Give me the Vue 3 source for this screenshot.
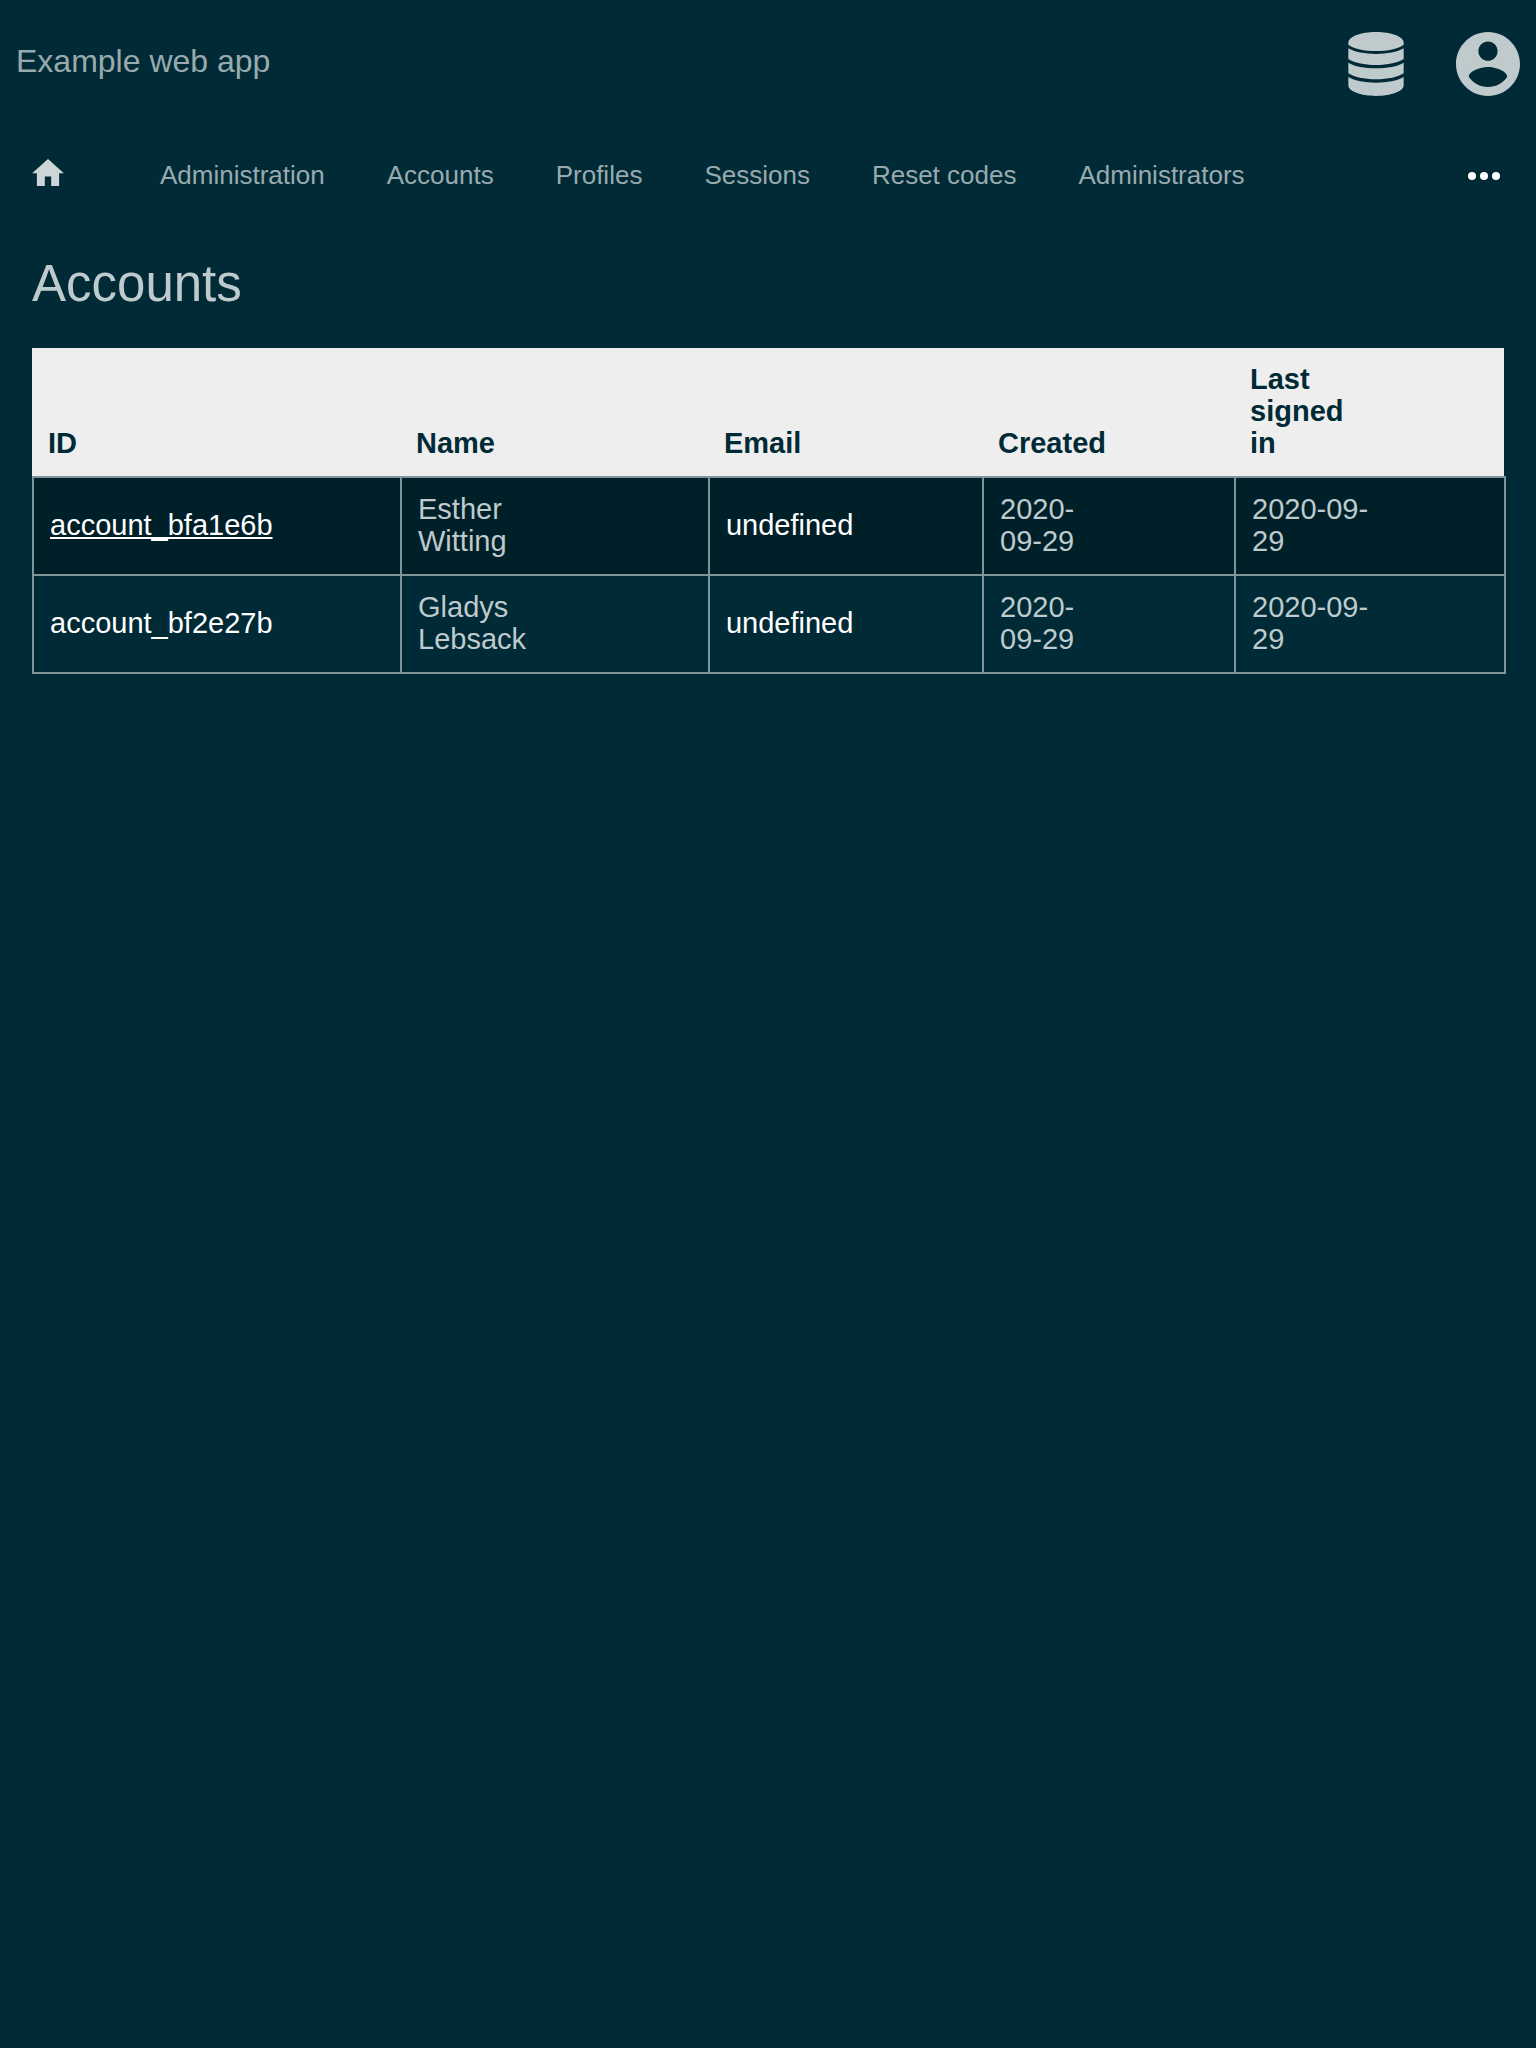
<script setup>
const links = ['Administration', 'Accounts', 'Profiles', 'Sessions', 'Reset codes', 'Administrators']

const columns = [
  { label: 'ID', width: '25%' },
  { label: 'Name', width: '20.92%' },
  { label: 'Email', width: '18.62%' },
  { label: 'Created', width: '17.12%' },
  { label: 'Last signed in', width: '18.34%' },
]

const accounts = [
  { id: 'account_bfa1e6b', name: 'Esther Witting', created: '2020-09-29', signedIn: '2020-09-29', active: true },
  { id: 'account_bf2e27b', name: 'Gladys Lebsack', created: '2020-09-29', signedIn: '2020-09-29', active: false },
]
</script>

<template>
  <div class="page">
    <header class="header">
      <a class="brand" href="#">Example web app</a>
      <div class="tools">
        <button type="button" class="icon-button" aria-label="Data">
          <svg width="56" height="64" viewBox="0 0 168 192" fill="currentColor" aria-hidden="true">
            <path d="M1 32C1 14 38 0 84 0s83 14 83 32v6c-16 12-48 19-83 19S17 50 1 38z" />
            <path d="M1 49c18 11 50 17 83 17s65-6 83-17v32c-16 11-48 18-83 18S17 92 1 81z" />
            <path d="M1 92c18 11 50 17 83 17s65-6 83-17v32c-16 11-48 18-83 18S17 135 1 124z" />
            <path d="M1 135c18 11 50 17 83 17s65-6 83-17v25c0 18-37 32-83 32S1 178 1 160z" />
          </svg>
        </button>
        <button type="button" class="icon-button" aria-label="Your account">
          <svg width="64" height="64" viewBox="2 2 20 20" fill="currentColor" aria-hidden="true">
            <path d="M12 2C6.480 2 2 6.480 2 12s4.480 10 10 10 10-4.480 10-10S17.520 2 12 2zm0 3c1.660 0 3 1.340 3 3s-1.340 3-3 3-3-1.340-3-3 1.340-3 3-3zm0 14.200c-2.500 0-4.710-1.280-6-3.220.030-1.990 4-3.080 6-3.080 1.990 0 5.970 1.090 6 3.080-1.290 1.940-3.500 3.220-6 3.220z" />
          </svg>
        </button>
      </div>
    </header>

    <nav class="nav" aria-label="Main">
      <a class="home" href="#" aria-label="Home">
        <svg width="32" height="27" viewBox="2 3 20 17" fill="currentColor" aria-hidden="true">
          <path d="M10 20v-6h4v6h5v-8h3L12 3 2 12h3v8z" />
        </svg>
      </a>
      <div class="links">
        <a v-for="link in links" :key="link" class="link" href="#">{{ link }}</a>
      </div>
      <button type="button" class="more" aria-label="More">
        <svg width="32" height="8" viewBox="0 0 32 8" fill="currentColor" aria-hidden="true">
          <circle cx="4" cy="4" r="4" />
          <circle cx="16" cy="4" r="4" />
          <circle cx="28" cy="4" r="4" />
        </svg>
      </button>
    </nav>

    <main class="main">
      <h1 class="title">Accounts</h1>
      <table class="table">
        <colgroup>
          <col v-for="column in columns" :key="column.label" :style="{ width: column.width }" />
        </colgroup>
        <thead>
          <tr>
            <th v-for="column in columns" :key="column.label" scope="col">{{ column.label }}</th>
          </tr>
        </thead>
        <tbody>
          <tr v-for="account in accounts" :key="account.id" :class="{ active: account.active }">
            <td><a class="cell-link" href="#">{{ account.id }}</a></td>
            <td>{{ account.name }}</td>
            <td><a class="cell-link plain" href="#">undefined</a></td>
            <td>{{ account.created }}</td>
            <td>{{ account.signedIn }}</td>
          </tr>
        </tbody>
      </table>
    </main>
  </div>
</template>

<style>
body {
  background: #002b36;
}
</style>

<style scoped>
.page {
  min-height: 100vh;
  background: #002b36;
  color: #bfcacd;
  font-family: "Liberation Sans", Arial, sans-serif;
  font-size: 29px;
  line-height: 32px;
}

button {
  display: flex;
  padding: 0;
  border: 0;
  background: none;
  color: inherit;
  cursor: pointer;
}

svg {
  display: block;
}

.header {
  display: flex;
  justify-content: space-between;
  align-items: flex-start;
  padding: 32px 16px;
}

.brand {
  color: #99aaaf;
  font-size: 32px;
  line-height: 58px;
  text-decoration: none;
}

.tools {
  display: flex;
  gap: 52px;
}

.nav {
  display: flex;
  align-items: flex-start;
  padding: 31px 32px;
}

.home {
  margin-right: 96px;
  color: #ccd5d7;
}

.links {
  display: flex;
  flex: 1;
  gap: 62px;
}

.link {
  color: #99aaaf;
  font-size: 26px;
  text-decoration: none;
  white-space: nowrap;
}

.more {
  align-items: center;
  height: 34px;
  margin-right: 4px;
  color: #fff;
}

.main {
  padding: 28px 32px 32px;
}

.title {
  margin: 0 0 32px;
  font-size: 51px;
  font-weight: 400;
  line-height: 64px;
}

.table {
  width: 100%;
  table-layout: fixed;
  border-spacing: 0;
}

th,
td {
  padding: 15px 132px 17px 16px;
  text-align: left;
}

th {
  background: #eee;
  color: #002b36;
  vertical-align: bottom;
}

td {
  border-top: 2px solid #80959a;
  border-left: 2px solid #80959a;
}

td:last-child {
  box-shadow: 2px 0 0 #80959a;
}

tbody tr:last-child td {
  border-bottom: 2px solid #80959a;
}

.active {
  background: #002029;
}

.cell-link {
  color: #fff;
  text-decoration: none;
}

.active .cell-link:not(.plain) {
  text-decoration: underline;
  text-decoration-skip-ink: none;
}
</style>
